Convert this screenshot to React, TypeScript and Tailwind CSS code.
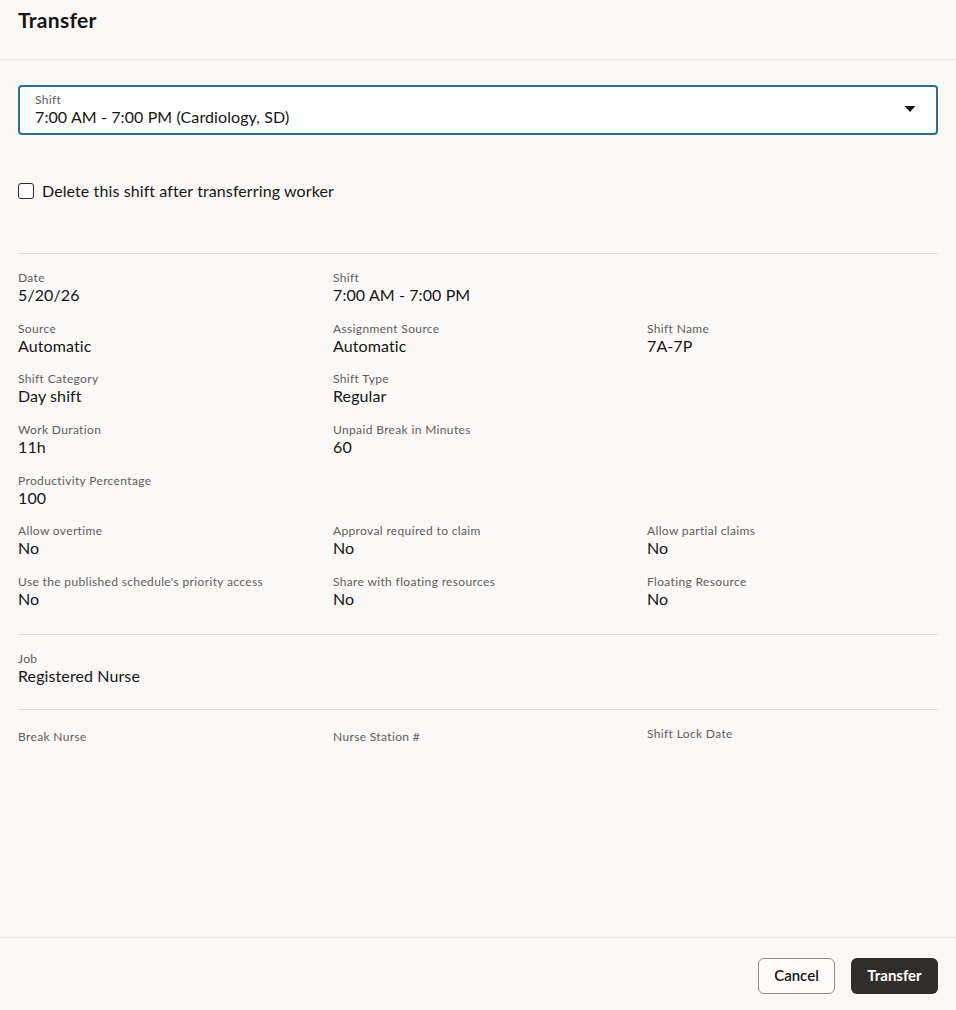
import React from 'react'

type Field = { label: string; value?: string } | null

const rows: Field[][] = [
  [{ label: 'Date', value: '5/20/26' }, { label: 'Shift', value: '7:00 AM - 7:00 PM' }, null],
  [
    { label: 'Source', value: 'Automatic' },
    { label: 'Assignment Source', value: 'Automatic' },
    { label: 'Shift Name', value: '7A-7P' },
  ],
  [{ label: 'Shift Category', value: 'Day shift' }, { label: 'Shift Type', value: 'Regular' }, null],
  [{ label: 'Work Duration', value: '11h' }, { label: 'Unpaid Break in Minutes', value: '60' }, null],
  [{ label: 'Productivity Percentage', value: '100' }, null, null],
  [
    { label: 'Allow overtime', value: 'No' },
    { label: 'Approval required to claim', value: 'No' },
    { label: 'Allow partial claims', value: 'No' },
  ],
  [
    { label: "Use the published schedule's priority access", value: 'No' },
    { label: 'Share with floating resources', value: 'No' },
    { label: 'Floating Resource', value: 'No' },
  ],
]

function ReadOnlyField({ label, value }: { label: string; value?: string }) {
  return (
    <div className="flex flex-col">
      <div className="text-[12px] leading-[15px] tracking-[0.35px] text-[#5f5c59]">{label}</div>
      {value !== undefined && (
        <div className="text-[16px] leading-5 tracking-[0.1px] text-[#161513]">{value}</div>
      )}
    </div>
  )
}

export default function App() {
  return (
    <div
      className="flex h-screen flex-col bg-[#faf9f8] text-[#161513]"
      style={{ fontFamily: 'Lato, "Noto Sans", sans-serif' }}
    >
      <div className="h-[60px] shrink-0 border-b border-[#e8e6e3] px-[18px] pt-[6px]">
        <h1 className="text-[21px] font-bold leading-7 tracking-[0.3px]">Transfer</h1>
      </div>

      <div className="flex-1 px-[18px]">
        <div className="mt-[25px] flex h-[50px] items-center rounded-[4px] border-2 border-[#2c6e94] bg-white pl-[15px] pr-[20px]">
          <div className="flex flex-1 flex-col">
            <span className="text-[12px] leading-[14px] tracking-[0.35px] text-[#5f5c59]">Shift</span>
            <span className="text-[16px] leading-5 tracking-[0.1px]">7:00 AM - 7:00 PM (Cardiology, SD)</span>
          </div>
          <svg width="12" height="6" viewBox="0 0 12 6" className="mt-[-3px]">
            <path d="M0.5 0 L11.5 0 L6 6 Z" fill="#161513" />
          </svg>
        </div>

        <label className="mt-[44px] flex h-6 items-center gap-[8px] text-[16px] tracking-[0.1px]">
          <span className="h-4 w-4 rounded-[3px] border-[1.5px] border-[#2b2927] bg-white" />
          Delete this shift after transferring worker
        </label>

        <div className="mt-[50px] border-t border-[#dedcd9] pt-[16px] pb-[25px]">
          <div className="grid grid-cols-[315px_314px_1fr] gap-y-[15.67px]">
            {rows.flatMap((row, ri) =>
              row.map((f, ci) => (
                <div key={`${ri}-${ci}`}>{f && <ReadOnlyField label={f.label} value={f.value} />}</div>
              ))
            )}
          </div>
        </div>

        <div className="border-t border-[#dedcd9] pt-[16px] pb-[23px]">
          <ReadOnlyField label="Job" value="Registered Nurse" />
        </div>

        <div className="grid grid-cols-[315px_314px_1fr] border-t border-[#dedcd9] pt-[19px]">
          <ReadOnlyField label="Break Nurse" />
          <ReadOnlyField label="Nurse Station #" />
          <div className="-mt-[3px]">
            <ReadOnlyField label="Shift Lock Date" />
          </div>
        </div>
      </div>

      <div className="flex shrink-0 justify-end gap-4 border-t border-[#ebe9e6] px-[18px] pt-[20px] pb-[16px]">
        <button className="h-9 w-[77px] rounded-[6px] border border-[#8f8c89] bg-[#fcfbfa] pb-[2px] text-[15px] font-semibold text-[#161513]">
          Cancel
        </button>
        <button className="h-9 w-[87px] rounded-[6px] bg-[#312d2a] pb-[2px] text-[15px] font-bold text-white">
          Transfer
        </button>
      </div>
    </div>
  )
}
